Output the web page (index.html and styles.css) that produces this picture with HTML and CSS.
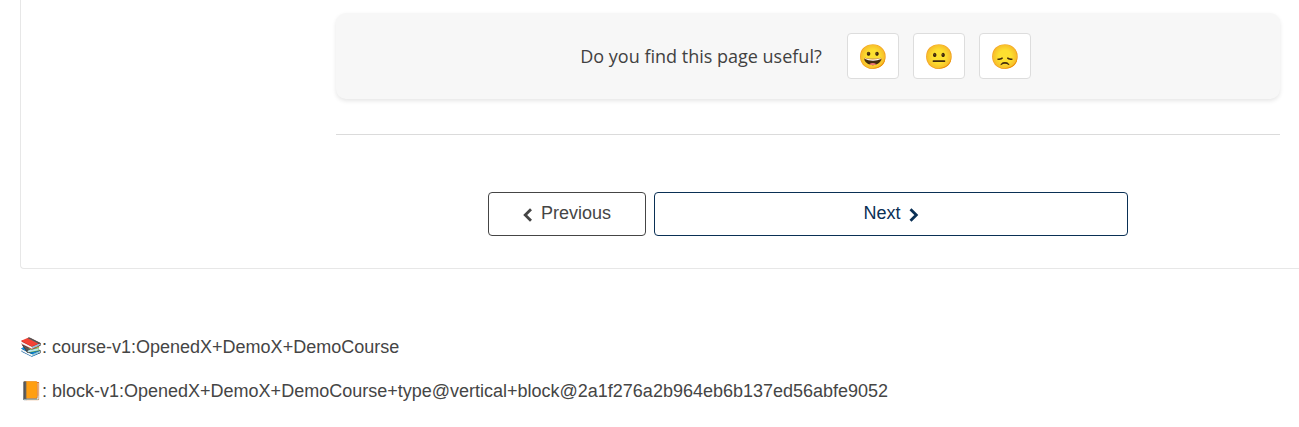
FILE: index.html
```html
<!DOCTYPE html>
<html lang="en">
<head>
<meta charset="utf-8">
<title>Course unit</title>
<link rel="stylesheet" href="styles.css">
</head>
<body>
<main class="unit">
  <section class="feedback">
    <span class="question">Do you find this page useful?</span>
    <div class="ratings">
      <button class="rating" type="button">😀</button>
      <button class="rating" type="button">😐</button>
      <button class="rating" type="button">😞</button>
    </div>
  </section>
  <hr class="divider">
  <nav class="pager">
    <a class="page-link previous"><svg class="chevron" viewBox="0 0 10 14"><path d="M8 1.2 2.2 7 8 12.8"/></svg><span>Previous</span></a>
    <a class="page-link next"><span>Next</span><svg class="chevron" viewBox="0 0 10 14"><path d="M1.5 1.2 7.3 7 1.5 12.8"/></svg></a>
  </nav>
</main>
<footer class="ids">
  <p class="id">📚: course-v1:OpenedX+DemoX+DemoCourse</p>
  <p class="id">📙: block-v1:OpenedX+DemoX+DemoCourse+type@vertical+block@2a1f276a2b964eb6b137ed56abfe9052</p>
</footer>
</body>
</html>
```
FILE: styles.css
```css
* { box-sizing: border-box; }
body {
  margin: 0;
  overflow: hidden;
  background: #fff;
  color: #454545;
  font: 18px/28px "Liberation Sans", Arial, sans-serif;
}
.unit {
  height: 269px;
  margin-left: 20px;
  padding: 13px 19px 0 315px;
  border: solid #e7e7e7;
  border-width: 0 0 1px 1px;
  border-bottom-left-radius: 4px;
}
.feedback {
  display: flex;
  align-items: center;
  justify-content: center;
  gap: 25px;
  height: 86px;
  padding-right: 5px;
  border-radius: 10px;
  background: #f7f7f7;
  box-shadow: 0 2px 4px rgba(0, 0, 0, .1);
}
.question {
  color: #414141;
  font-family: "Open Sans", sans-serif;
}
.ratings { display: flex; gap: 14px; }
.rating {
  width: 52px;
  height: 46px;
  padding: 0;
  border: 1px solid #ddd;
  border-radius: 4px;
  background: #fff;
  font: 24px/44px "Open Sans", sans-serif;
}
.divider {
  height: 1px;
  margin: 35px 0 57px;
  border: 0;
  background: #dbdbdb;
}
.pager {
  display: flex;
  justify-content: center;
  gap: 8px;
}
.page-link {
  display: flex;
  align-items: center;
  justify-content: center;
  gap: 8px;
  height: 44px;
  padding-bottom: 2px;
  border: 1px solid #454545;
  border-radius: 4px;
}
.previous { width: 158px; }
.next {
  width: 474px;
  border-color: #0a3055;
  color: #0a3055;
}
.chevron {
  overflow: visible;
  width: 10px;
  height: 14px;
  margin-top: 4px;
  fill: none;
  stroke: currentColor;
  stroke-width: 2.8;
}
.ids { padding: 64px 20px 0; }
.id { margin: 0 0 16px; }
```
